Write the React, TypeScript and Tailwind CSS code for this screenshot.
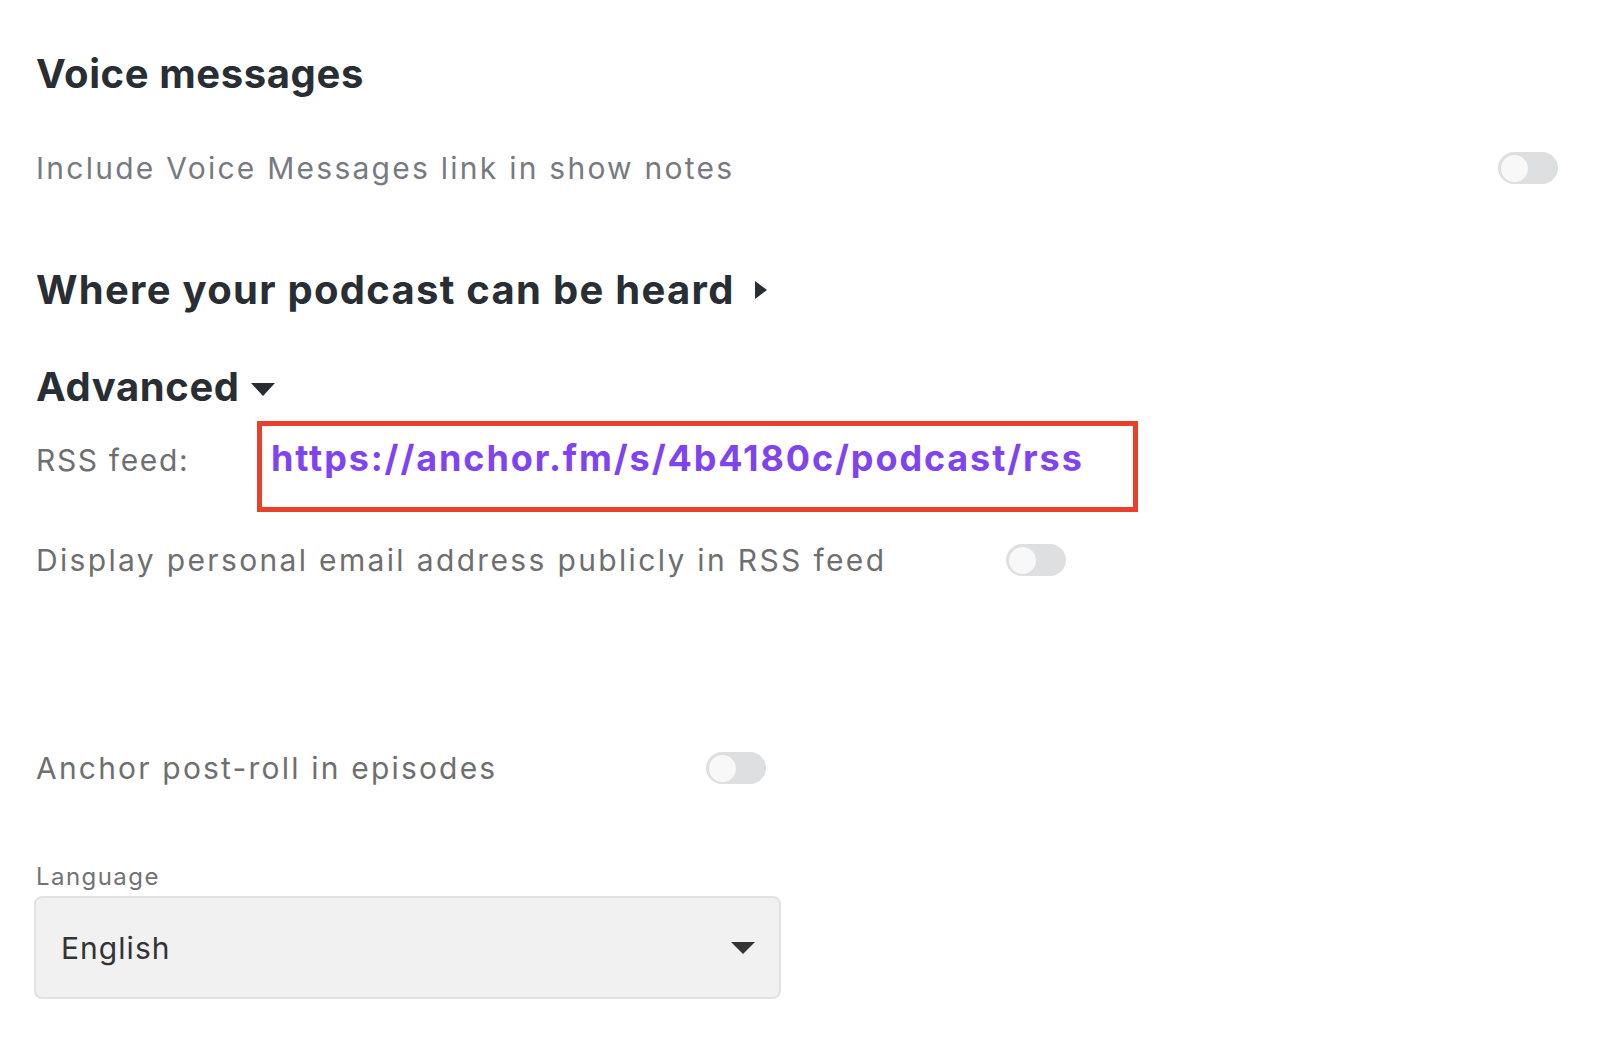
import React from "react"

// Settings panel: voice messages, distribution, advanced options

const FONT = "font-['Inter',sans-serif]"

function Toggle({ on = false }: { on?: boolean }) {
  return (
    <div
      role="switch"
      aria-checked={on}
      className="relative h-[32px] w-[60px] shrink-0 rounded-full bg-[#dedfe1]"
    >
      <span className="absolute left-[3px] top-[2.5px] h-[27px] w-[27px] rounded-full bg-[#f8f8f8]" />
    </div>
  )
}

function SectionHeading({
  children,
  caret,
  wide = false,
}: {
  children: React.ReactNode
  caret?: "right" | "down"
  wide?: boolean
}) {
  return (
    <h2
      className={`flex items-center text-[40px] font-bold leading-[48px] text-[#292e35] ${
        wide ? "tracking-[0.032em]" : "tracking-[0.015em]"
      }`}
    >
      <span>{children}</span>
      {caret === "right" && (
        <svg width="12" height="18" viewBox="0 0 12 18" className="ml-[20px]">
          <path d="M0 0 L12 9 L0 18 Z" fill="#292e35" />
        </svg>
      )}
      {caret === "down" && (
        <svg width="24" height="13" viewBox="0 0 24 13" className="ml-[11px] mt-[4px]">
          <path d="M0 0 L24 0 L12 13 Z" fill="#292e35" />
        </svg>
      )}
    </h2>
  )
}

export default function App() {
  return (
    <div className={`${FONT} min-h-[1040px] w-[1624px] bg-white pl-[36px] pr-[66px] pt-[50px]`}>
      {/* Voice messages */}
      <SectionHeading>Voice messages</SectionHeading>

      <div className="mt-[52px] flex items-center justify-between">
        <span className="text-[30px] leading-[36px] tracking-[0.075em] text-[#777a80]">
          Include Voice Messages link in show notes
        </span>
        <Toggle />
      </div>

      {/* Distribution */}
      <div className="mt-[80px]">
        <SectionHeading caret="right" wide>
          Where your podcast can be heard
        </SectionHeading>
      </div>

      {/* Advanced */}
      <div className="mt-[49px]">
        <SectionHeading caret="down">Advanced</SectionHeading>
      </div>

      <div className="mt-[10px] flex items-baseline">
        <span className="w-[221px] shrink-0 text-[30px] leading-[36px] tracking-[0.055em] text-[#6f6f6f]">
          RSS feed:
        </span>
        <div className="w-[881px] border-[5px] border-[#e8402b] pb-[27px] pl-[9px] pt-[10px]">
          <a
            href="#"
            className="text-[36px] font-bold leading-[44px] tracking-[0.052em] text-[#7f44ef]"
          >
            https://anchor.fm/s/4b4180c/podcast/rss
          </a>
        </div>
      </div>

      <div className="mt-[30px] flex items-center">
        <span className="w-[970px] shrink-0 text-[30px] leading-[36px] tracking-[0.078em] text-[#6f6f6f]">
          Display personal email address publicly in RSS feed
        </span>
        <Toggle />
      </div>

      <div className="mt-[172px] flex items-center">
        <span className="w-[670px] shrink-0 text-[30px] leading-[36px] tracking-[0.073em] text-[#6f6f6f]">
          Anchor post-roll in episodes
        </span>
        <Toggle />
      </div>

      {/* Language */}
      <label className="mt-[77px] block text-[24px] leading-[28px] tracking-[0.06em] text-[#737373]">
        Language
      </label>
      <div className="-ml-[2px] mt-[5px] flex h-[103px] w-[747px] items-center justify-between rounded-[8px] border-2 border-[#e2e2e2] bg-[#f1f1f1] pl-[25px] pr-[24px]">
        <span className="text-[30px] leading-[36px] tracking-[0.035em] text-[#333333]">English</span>
        <svg width="24" height="12" viewBox="0 0 24 12">
          <path d="M0 0 L24 0 L12 12 Z" fill="#333333" />
        </svg>
      </div>
    </div>
  )
}
